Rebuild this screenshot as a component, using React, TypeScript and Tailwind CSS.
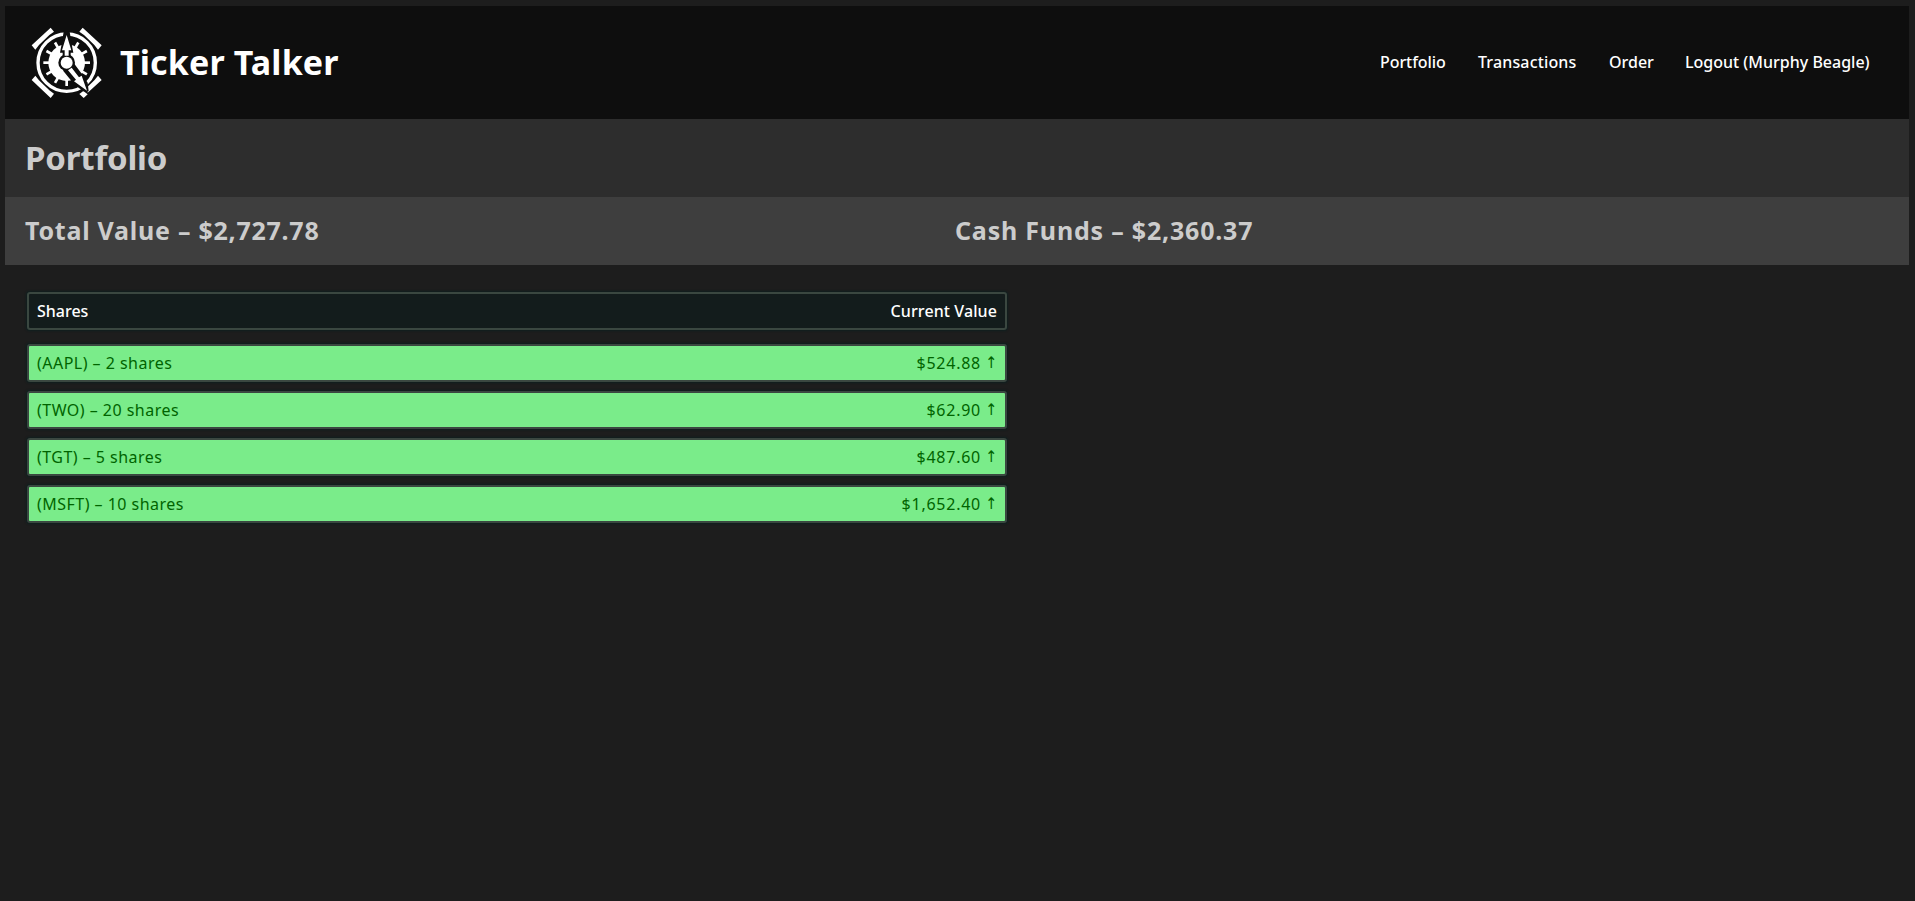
const links = [
  { label: "Portfolio", style: "w-[98px] tracking-[-0.06px]" },
  { label: "Transactions", style: "w-[131px] tracking-[0.15px]" },
  { label: "Order", style: "w-[76px]" },
  { label: "Logout (Murphy Beagle)", style: "w-[185px]" },
];

const holdings = [
  { symbol: "AAPL", shares: 2, value: "$524.88" },
  { symbol: "TWO", shares: 20, value: "$62.90" },
  { symbol: "TGT", shares: 5, value: "$487.60" },
  { symbol: "MSFT", shares: 10, value: "$1,652.40" },
];

function Logo() {
  return (
    <svg className="size-[94px] shrink-0" viewBox="0 0 282 282" fill="none" aria-hidden="true">
      <g fill="#fff">
        <path d="M35 88L92 35L102 47L88 57L57 87L46 101Z" />
        <path d="M245 88L188 35L178 47L192 57L223 87L234 101Z" />
        <path d="M35 192L46 179L57 193L88 223L102 233L92 246Z" />
        <path d="M245 192L234 179L223 193L203 212L203 230Z" />
        <path d="M178 234L190 225L203 235L191 246Z" />
      </g>
      <circle cx="140" cy="140" r="86" stroke="#fff" strokeWidth="10" />
      <circle cx="140" cy="140" r="55" fill="#fff" />
      <g stroke="#fff" strokeWidth="8">
        {[30, 60, 90, 120, 180, 210, 240, 270, 300, 330].map((deg) => (
          <path key={deg} d="M140 70V92" transform={`rotate(${deg} 140 140)`} />
        ))}
      </g>
      <path d="M131 47H149L156 89L160 110H152V136H128V110H120L124 89Z" fill="#0e0e0e" />
      <path d="M126 138L150 126L184 172L203 200L206 226L190 226L160 203L152 192L130 165Z" fill="#0e0e0e" />
      <circle cx="140" cy="140" r="25" fill="#0e0e0e" />
      <circle cx="140" cy="140" r="18" fill="#fff" />
      <path d="M140 57L154 103H146V119H134V103H126Z" fill="#fff" />
      <path d="M144 163L155 155L177 184L185 179L201 224L162 196L168 191Z" fill="#fff" />
    </svg>
  );
}

const frame =
  "flex h-[38px] items-center justify-between rounded-[3px] border-2 border-[#3a4740] px-2 shadow-[0_0_2px_1px_#0f1f1f]";

export default function App() {
  return (
    <div className="min-h-screen bg-[#1d1d1d] px-[5px] pt-1.5 font-['Noto_Sans',sans-serif]">
      <header className="flex h-[113px] w-[1904px] items-center justify-between bg-[#0e0e0e] pr-[39px] pl-[15px] text-white">
        <div className="flex items-center">
          <Logo />
          <h1 className="pb-0.5 pl-1.5 text-[34px] leading-[46px] font-bold tracking-[0.15px]">Ticker Talker</h1>
        </div>
        <nav className="flex pb-0.5 text-base font-medium whitespace-nowrap">
          {links.map((l) => (
            <a key={l.label} href="#" className={l.style}>
              {l.label}
            </a>
          ))}
        </nav>
      </header>

      <div className="flex h-[78px] w-[1904px] items-center bg-[#2d2d2d] pl-5 text-[#cccccc]">
        <h2 className="text-[33px] font-bold tracking-[-0.2px]">Portfolio</h2>
      </div>

      <div className="flex h-[68px] w-[1904px] items-center bg-[#3e3e3e] pl-5 text-[25px] font-bold text-[#cccccc]">
        <h3 className="w-[930px] tracking-[0.75px]">Total Value – $2,727.78</h3>
        <h3 className="tracking-[0.8px]">Cash Funds – $2,360.37</h3>
      </div>

      <main className="ml-[22px] w-[980px] pt-[27px]">
        <div className={`${frame} bg-[#131c1c] text-base font-medium text-white`}>
          <span>Shares</span>
          <span className="tracking-[0.1px]">Current Value</span>
        </div>
        <ul className="flex flex-col gap-[9px] pt-3.5">
          {holdings.map((h) => (
            <li key={h.symbol} className={`${frame} bg-[#7aec8a] text-base text-[#006400]`}>
              <span className="tracking-[0.47px]">
                ({h.symbol}) – {h.shares} shares
              </span>
              <span className="flex items-center tracking-[0.75px]">
                {h.value}
                <span className="w-4 text-right font-['DejaVu_Sans_Condensed',sans-serif] tracking-normal">↑</span>
              </span>
            </li>
          ))}
        </ul>
      </main>
    </div>
  );
}
